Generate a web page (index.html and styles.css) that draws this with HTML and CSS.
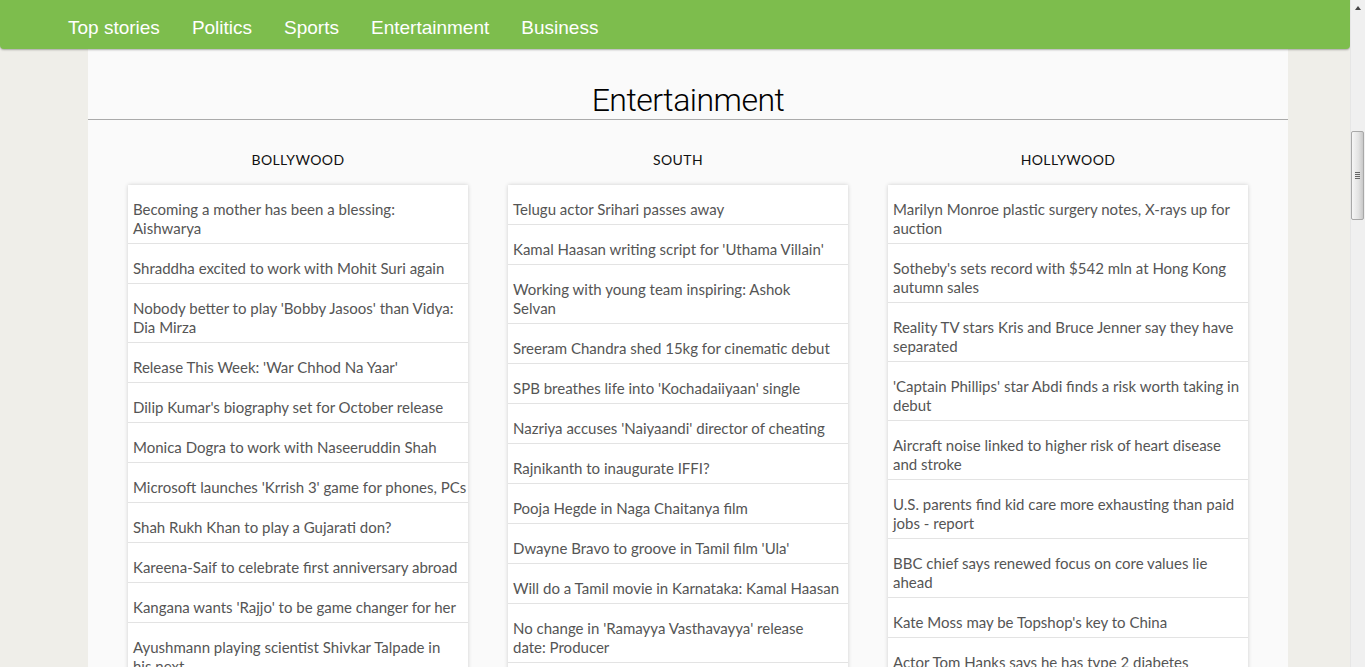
FILE: index.html
```html
<!DOCTYPE html>
<html lang="en">
<head>
<meta charset="utf-8">
<title>Entertainment</title>
<link rel="stylesheet" href="styles.css">
</head>
<body>
<div class="window">
  <div class="viewport">
    <nav class="topnav">
      <a href="#">Top stories</a>
      <a href="#">Politics</a>
      <a href="#">Sports</a>
      <a href="#">Entertainment</a>
      <a href="#">Business</a>
    </nav>
    <main class="page">
      <h1 class="page-title">Entertainment</h1>
      <div class="columns">
        <section class="col">
          <h2 class="col-title">BOLLYWOOD</h2>
          <ul class="news">
            <li>Becoming a mother has been a blessing:<br>Aishwarya</li>
            <li>Shraddha excited to work with Mohit Suri again</li>
            <li>Nobody better to play 'Bobby Jasoos' than Vidya: Dia Mirza</li>
            <li>Release This Week: 'War Chhod Na Yaar'</li>
            <li>Dilip Kumar's biography set for October release</li>
            <li>Monica Dogra to work with Naseeruddin Shah</li>
            <li>Microsoft launches 'Krrish 3' game for phones, PCs</li>
            <li>Shah Rukh Khan to play a Gujarati don?</li>
            <li>Kareena-Saif to celebrate first anniversary abroad</li>
            <li>Kangana wants 'Rajjo' to be game changer for her</li>
            <li>Ayushmann playing scientist Shivkar Talpade in<br>his next</li>
          </ul>
        </section>
        <section class="col">
          <h2 class="col-title">SOUTH</h2>
          <ul class="news">
            <li>Telugu actor Srihari passes away</li>
            <li>Kamal Haasan writing script for 'Uthama Villain'</li>
            <li>Working with young team inspiring: Ashok<br>Selvan</li>
            <li>Sreeram Chandra shed 15kg for cinematic debut</li>
            <li>SPB breathes life into 'Kochadaiiyaan' single</li>
            <li>Nazriya accuses 'Naiyaandi' director of cheating</li>
            <li>Rajnikanth to inaugurate IFFI?</li>
            <li>Pooja Hegde in Naga Chaitanya film</li>
            <li>Dwayne Bravo to groove in Tamil film 'Ula'</li>
            <li>Will do a Tamil movie in Karnataka: Kamal Haasan</li>
            <li>No change in 'Ramayya Vasthavayya' release<br>date: Producer</li>
            <li>Vishal's 'Pandiya Naadu' gets U certificate</li>
          </ul>
        </section>
        <section class="col col-wide">
          <h2 class="col-title">HOLLYWOOD</h2>
          <ul class="news">
            <li>Marilyn Monroe plastic surgery notes, X-rays up for auction</li>
            <li>Sotheby's sets record with $542 mln at Hong Kong autumn sales</li>
            <li>Reality TV stars Kris and Bruce Jenner say they have separated</li>
            <li>'Captain Phillips' star Abdi finds a risk worth taking in debut</li>
            <li>Aircraft noise linked to higher risk of heart disease and stroke</li>
            <li>U.S. parents find kid care more exhausting than paid jobs - report</li>
            <li>BBC chief says renewed focus on core values lie ahead</li>
            <li>Kate Moss may be Topshop's key to China</li>
            <li>Actor Tom Hanks says he has type 2 diabetes</li>
            <li>Miley Cyrus says she is not in love with anyone</li>
          </ul>
        </section>
      </div>
    </main>
  </div>
  <div class="scrollbar">
    <div class="scroll-arrow"></div>
    <div class="scroll-track">
      <div class="scroll-thumb"><span class="grip"></span></div>
    </div>
  </div>
</div>
</body>
</html>
```

FILE: styles.css
```css
html, body {
  margin: 0;
  padding: 0;
  height: 100%;
  overflow: hidden;
}

.window {
  display: flex;
  height: 667px;
  background: #efeee9;
}

.viewport {
  width: 1350px;
  height: 667px;
  overflow: hidden;
  display: flex;
  flex-direction: column;
}

.topnav {
  flex-shrink: 0;
  height: 49px;
  box-sizing: border-box;
  padding: 17px 0 0 68px;
  background: #7dbd4d;
  border-radius: 0 0 4px 4px;
  box-shadow: 0 1px 2px rgba(0, 0, 0, 0.3);
  display: flex;
  gap: 32px;
  position: relative;
  z-index: 1;
}

.topnav a {
  color: #fff;
  font: 19px/21px "Liberation Sans", Arial, sans-serif;
  text-decoration: none;
}

.page {
  width: 1200px;
  margin: 0 0 0 88px;
  background: #fafafa;
  flex: 1;
}

.page-title {
  margin: 0;
  padding: 33px 0 1px;
  border-bottom: 1px solid #aaaaaa;
  text-align: center;
  font: 300 32px/36px Roboto, "Liberation Sans", sans-serif;
  letter-spacing: -0.5px;
  color: #000;
}

.columns {
  display: flex;
  gap: 40px;
  padding: 30px 40px 0;
}

.col {
  width: 340px;
  flex-shrink: 0;
}

.col-wide {
  width: 360px;
}

.col-title {
  margin: 0 0 15px;
  font: 400 14px/20px Lato, "Noto Sans", sans-serif;
  letter-spacing: 0.4px;
  text-align: center;
  color: #111;
}

.news {
  list-style: none;
  margin: 0;
  padding: 0;
  background: #fff;
  box-shadow: 0 0 4px rgba(0, 0, 0, 0.18);
}

.news li {
  padding: 15px 0 5px 5px;
  border-bottom: 1px solid #e3e3e3;
  font: 400 15px/19px Lato, "Noto Sans", sans-serif;
  color: #555;
}

.col-wide .news li {
  padding-right: 5px;
}

.scrollbar {
  width: 15px;
  height: 667px;
  background: #f0f0f0;
  border-left: 1px solid #e6e6e6;
  box-sizing: border-box;
  display: flex;
  flex-direction: column;
}

.scroll-arrow {
  height: 15px;
  display: flex;
  justify-content: center;
  align-items: center;
}

.scroll-arrow::before {
  content: "";
  border-left: 3px solid transparent;
  border-right: 3px solid transparent;
  border-bottom: 4px solid #444;
}

.scroll-track {
  flex: 1;
  padding-top: 116px;
}

.scroll-thumb {
  height: 89px;
  margin-right: 1px;
  box-sizing: border-box;
  border: 1px solid #a8a8a8;
  border-radius: 2px;
  background: linear-gradient(to right, #f6f6f6, #e2e2e2 60%, #c8c8c8);
  display: flex;
  align-items: center;
  justify-content: center;
}

.grip {
  width: 5px;
  height: 7px;
  background: repeating-linear-gradient(to bottom, #666 0 1px, transparent 1px 2px);
}
```
